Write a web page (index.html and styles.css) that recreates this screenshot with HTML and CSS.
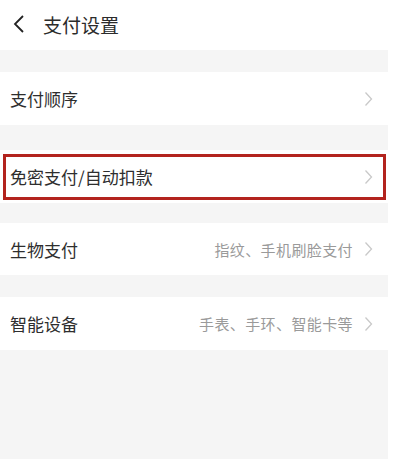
FILE: index.html
```html
<!DOCTYPE html>
<html lang="zh">
<head>
<meta charset="utf-8">
<link rel="stylesheet" href="styles.css">
</head>
<body>
<div class="screen">
  <header class="topbar">
    <svg class="back" width="14" height="20" viewBox="0 0 14 20"><path d="M11 2 L3 10 L11 18" fill="none" stroke="#222" stroke-width="1.8"/></svg>
    <span class="title">支付设置</span>
  </header>
  <div class="gap g1"></div>
  <div class="row r1"><span class="label">支付顺序</span><span class="right"><svg class="chev" width="9" height="16" viewBox="0 0 9 16"><path d="M1.5 1.5 L7.5 8 L1.5 14.5" fill="none" stroke="#c9c9c9" stroke-width="1.3"/></svg></span></div>
  <div class="gap g2"></div>
  <div class="row r2"><span class="label">免密支付/自动扣款</span><span class="right"><svg class="chev" width="9" height="16" viewBox="0 0 9 16"><path d="M1.5 1.5 L7.5 8 L1.5 14.5" fill="none" stroke="#c9c9c9" stroke-width="1.3"/></svg></span><div class="highlight"></div></div>
  <div class="gap g3"></div>
  <div class="row r3"><span class="label">生物支付</span><span class="right"><span class="hint">指纹、手机刷脸支付</span><svg class="chev" width="9" height="16" viewBox="0 0 9 16"><path d="M1.5 1.5 L7.5 8 L1.5 14.5" fill="none" stroke="#c9c9c9" stroke-width="1.3"/></svg></span></div>
  <div class="gap g4"></div>
  <div class="row r4"><span class="label">智能设备</span><span class="right"><span class="hint">手表、手环、智能卡等</span><svg class="chev" width="9" height="16" viewBox="0 0 9 16"><path d="M1.5 1.5 L7.5 8 L1.5 14.5" fill="none" stroke="#c9c9c9" stroke-width="1.3"/></svg></span></div>
  <div class="rest"></div>
</div>
</body>
</html>
```
FILE: styles.css
```css
html, body {
  margin: 0;
  padding: 0;
  background: #ffffff;
  font-family: "Noto Sans CJK SC", "Noto Sans", sans-serif;
}
.screen {
  width: 388px;
  height: 459px;
  display: flex;
  flex-direction: column;
  background: #ffffff;
}
.topbar {
  height: 50px;
  display: flex;
  align-items: center;
  padding-left: 12px;
  gap: 17px;
  box-sizing: border-box;
  padding-bottom: 2px;
}
.back { display: block; }
.title {
  font-size: 19px;
  color: #2b2b2b;
  line-height: 1;
}
.gap { background: #f5f5f5; }
.g1 { height: 22px; }
.g2 { height: 25px; }
.g3 { height: 20px; }
.g4 { height: 22px; }
.row {
  position: relative;
  display: flex;
  align-items: center;
  justify-content: space-between;
  background: #ffffff;
  padding: 0 15px 0 10px;
}
.r1, .r2, .r4 { height: 53px; }
.r3 { height: 52px; }
.label {
  font-size: 17px;
  color: #2e2e2e;
  line-height: 1;
}
.right {
  display: flex;
  align-items: center;
  gap: 11px;
}
.hint {
  font-size: 15px;
  color: #9a9a9a;
  line-height: 1;
  letter-spacing: 0.4px;
}
.chev { display: block; }
.highlight {
  position: absolute;
  left: 3px;
  top: 4px;
  width: 383px;
  height: 46px;
  box-sizing: border-box;
  border: 3px solid #b3231e;
}
.rest {
  flex: 1;
  background: #f5f5f5;
}
```
